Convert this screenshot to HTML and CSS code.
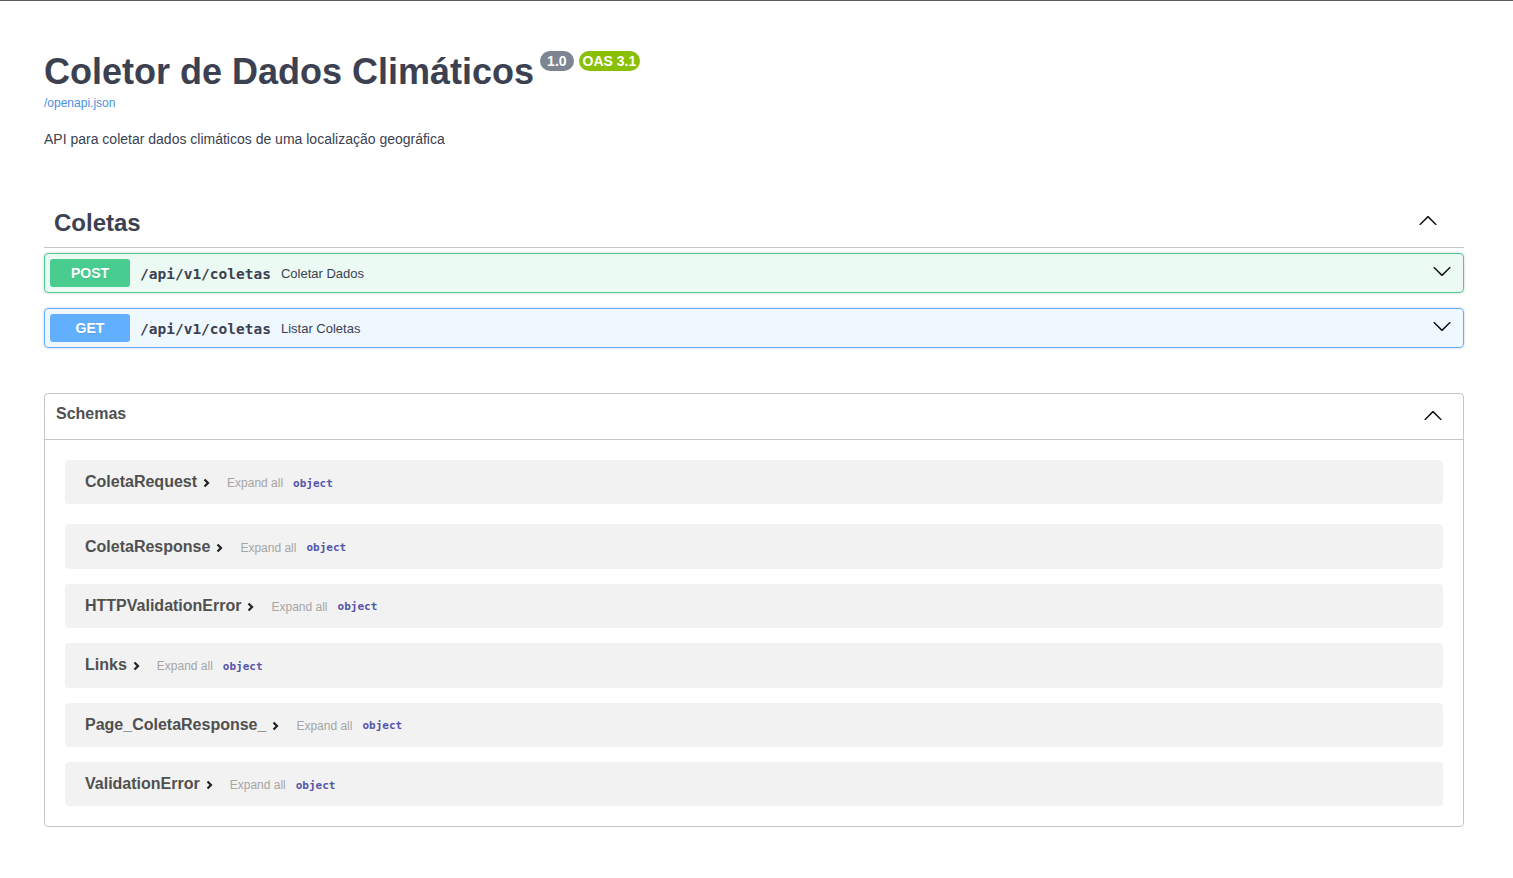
FILE: index.html
```html
<!DOCTYPE html>
<html lang="pt">
<head>
<meta charset="utf-8">
<title>Coletor de Dados Climáticos</title>
<link rel="stylesheet" href="styles.css">
</head>
<body>
<div class="topline"></div>
<div class="wrapper">
  <section class="info">
    <div class="hgroup">
      <h2 class="title"><span>Coletor de Dados Climáticos</span><span class="badge ver">1.0</span><span class="badge oas">OAS 3.1</span></h2>
      <a class="link" href="#">/openapi.json</a>
    </div>
    <p class="description">API para coletar dados climáticos de uma localização geográfica</p>
  </section>

  <section class="tag-section">
    <h3 class="tag">
      <span>Coletas</span>
      <svg class="arrow tag-arrow" width="20" height="20" viewBox="0 0 20 20"><path d="M17.418 14.908c.272.268.709.268.979 0s.271-.701 0-.969l-7.908-7.83c-.27-.268-.707-.268-.979 0l-7.908 7.83c-.27.268-.27.701 0 .969.271.268.709.268.979 0L10 7.767l7.418 7.141z"/></svg>
    </h3>
    <div class="opblock post">
      <span class="method">POST</span>
      <span class="path">/api/v1/coletas</span>
      <span class="summary">Coletar Dados</span>
      <svg class="arrow op-arrow" width="20" height="20" viewBox="0 0 20 20"><path d="M17.418 6.109c.272-.268.709-.268.979 0s.271.701 0 .969l-7.908 7.83c-.27.268-.707.268-.979 0l-7.908-7.83c-.27-.268-.27-.701 0-.969.271-.268.709-.268.979 0L10 13.25l7.418-7.141z"/></svg>
    </div>
    <div class="opblock get">
      <span class="method">GET</span>
      <span class="path">/api/v1/coletas</span>
      <span class="summary">Listar Coletas</span>
      <svg class="arrow op-arrow" width="20" height="20" viewBox="0 0 20 20"><path d="M17.418 6.109c.272-.268.709-.268.979 0s.271.701 0 .969l-7.908 7.83c-.27.268-.707.268-.979 0l-7.908-7.83c-.27-.268-.27-.701 0-.969.271-.268.709-.268.979 0L10 13.25l7.418-7.141z"/></svg>
    </div>
  </section>

  <section class="models">
    <h4 class="models-head">
      <span>Schemas</span>
      <svg class="arrow" width="20" height="20" viewBox="0 0 20 20"><path d="M17.418 14.908c.272.268.709.268.979 0s.271-.701 0-.969l-7.908-7.83c-.27-.268-.707-.268-.979 0l-7.908 7.83c-.27.268-.27.701 0 .969.271.268.709.268.979 0L10 7.767l7.418 7.141z"/></svg>
    </h4>
    <div class="model-list">
      <div class="model"><span class="model-title">ColetaRequest</span><svg class="chev" width="7" height="10" viewBox="0 0 7 10"><polyline points="1.5,1.5 5,5 1.5,8.5"/></svg><span class="expand">Expand all</span><span class="type">object</span></div>
      <div class="model"><span class="model-title">ColetaResponse</span><svg class="chev" width="7" height="10" viewBox="0 0 7 10"><polyline points="1.5,1.5 5,5 1.5,8.5"/></svg><span class="expand">Expand all</span><span class="type">object</span></div>
      <div class="model"><span class="model-title">HTTPValidationError</span><svg class="chev" width="7" height="10" viewBox="0 0 7 10"><polyline points="1.5,1.5 5,5 1.5,8.5"/></svg><span class="expand">Expand all</span><span class="type">object</span></div>
      <div class="model"><span class="model-title">Links</span><svg class="chev" width="7" height="10" viewBox="0 0 7 10"><polyline points="1.5,1.5 5,5 1.5,8.5"/></svg><span class="expand">Expand all</span><span class="type">object</span></div>
      <div class="model"><span class="model-title">Page_ColetaResponse_</span><svg class="chev" width="7" height="10" viewBox="0 0 7 10"><polyline points="1.5,1.5 5,5 1.5,8.5"/></svg><span class="expand">Expand all</span><span class="type">object</span></div>
      <div class="model"><span class="model-title">ValidationError</span><svg class="chev" width="7" height="10" viewBox="0 0 7 10"><polyline points="1.5,1.5 5,5 1.5,8.5"/></svg><span class="expand">Expand all</span><span class="type">object</span></div>
    </div>
  </section>
</div>
</body>
</html>
```

FILE: styles.css
```css
* { box-sizing: border-box; }

body {
  margin: 0;
  background: #fff;
  font-family: "Liberation Sans", Arial, sans-serif;
  color: #3b4151;
}

.topline {
  height: 1px;
  background: #555c62;
}

.wrapper {
  margin: 0 49px 0 44px;
}

/* info */
.info {
  margin: 50px 0 49px;
}

.title {
  display: flex;
  align-items: flex-start;
  margin: 0;
  font-size: 36px;
  line-height: 41px;
  font-weight: 700;
  color: #3b4151;
}

.badge {
  display: inline-block;
  padding: 2px 7px;
  border-radius: 57px;
  font-size: 14px;
  line-height: 16px;
  font-weight: 700;
  color: #fff;
}

.badge.ver {
  margin-left: 6px;
  background: #7d8492;
}

.badge.oas {
  margin-left: 5px;
  padding: 2px 4px;
  background: #89bf04;
}

.link {
  display: block;
  margin-top: 4px;
  font-size: 12px;
  line-height: 14px;
  color: #4990e2;
  text-decoration: none;
}

.description {
  margin: 19px 0 0;
  font-size: 14px;
  line-height: 20px;
  color: #3b4151;
}

/* tag */
.tag-section {
  display: flow-root;
}

.tag {
  display: flex;
  align-items: center;
  justify-content: space-between;
  margin: 0 0 5px;
  padding: 10px 26px 10px 10px;
  font-size: 24px;
  line-height: 29px;
  font-weight: 700;
  color: #3b4151;
  border-bottom: 1px solid rgba(59, 65, 81, .3);
}

.arrow {
  fill: #111;
  flex: none;
}

.tag-arrow {
  margin-bottom: 5px;
}

.opblock {
  display: flex;
  align-items: center;
  margin: 0 0 15px;
  padding: 5px;
  border: 1px solid;
  border-radius: 4px;
  box-shadow: 0 0 3px rgba(0, 0, 0, .19);
}

.opblock.post {
  background: rgba(73, 204, 144, .1);
  border-color: #49cc90;
}

.opblock.get {
  background: rgba(97, 175, 254, .1);
  border-color: #61affe;
}

.method {
  min-width: 80px;
  padding: 6px 0;
  border-radius: 3px;
  font-size: 14px;
  line-height: 16px;
  font-weight: 700;
  text-align: center;
  color: #fff;
  text-shadow: 0 1px 0 rgba(0, 0, 0, .1);
}

.post .method { background: #49cc90; }
.get .method { background: #61affe; }

.path {
  margin: 1px 10px 0;
  font-family: "DejaVu Sans Mono", "Liberation Mono", monospace;
  font-size: 14.5px;
  font-weight: 700;
  color: #3b4151;
}

.summary {
  flex: 1 1 auto;
  font-size: 13px;
  color: #3b4151;
}

.op-arrow {
  margin-right: 6px;
  margin-bottom: 4px;
}

/* models */
.models {
  margin: 30px 0;
  border: 1px solid rgba(59, 65, 81, .3);
  border-radius: 4px;
}

.models-head {
  display: flex;
  align-items: center;
  justify-content: space-between;
  margin: 0;
  padding: 8px 20px 13px 11px;
  font-size: 16px;
  line-height: 24px;
  font-weight: 700;
  color: #505050;
  border-bottom: 1px solid rgba(59, 65, 81, .3);
}

.models-head .arrow {
  margin-top: 2px;
}

.model-list {
  display: flex;
  flex-direction: column;
  gap: 15px;
  padding: 20px;
}

.model-list .model:first-child {
  margin-bottom: 5px;
}

.model {
  display: flex;
  align-items: center;
  height: 44.4px;
  padding: 0 20px;
  border-radius: 4px;
  background: rgba(0, 0, 0, .05);
}

.model-title {
  font-size: 16px;
  font-weight: 700;
  color: #505050;
}

.chev {
  margin-left: 6px;
  margin-top: 2px;
  fill: none;
  stroke: #222;
  stroke-width: 2.2;
}

.expand {
  margin-left: 17px;
  margin-top: 2px;
  font-size: 12px;
  color: #a5a5a5;
}

.type {
  margin-left: 10px;
  margin-top: 2px;
  font-family: "DejaVu Sans Mono", "Liberation Mono", monospace;
  font-size: 11px;
  font-weight: 700;
  color: #55a;
}
```
